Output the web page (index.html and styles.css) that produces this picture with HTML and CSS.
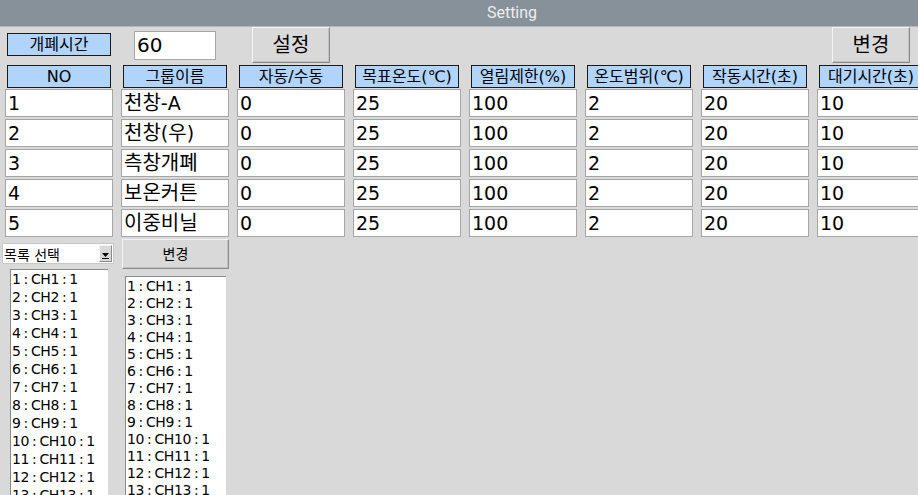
FILE: index.html
```html
<!DOCTYPE html>
<html lang="ko">
<head>
<meta charset="utf-8">
<title>Setting</title>
<link rel="stylesheet" href="styles.css">
</head>
<body>
<div class="app">
  <div class="titlebar">Setting</div>
  <div class="toprow">
    <div class="lbl lbl-open">개폐시간</div>
    <div class="entry entry-open">60</div>
    <div class="btn btn-set">설정</div>
    <div class="spacer"></div>
    <div class="btn btn-change">변경</div>
  </div>
  <div class="grid">
    <div class="lbl">NO</div>
    <div class="lbl">그룹이름</div>
    <div class="lbl">자동/수동</div>
    <div class="lbl">목표온도(℃)</div>
    <div class="lbl">열림제한(%)</div>
    <div class="lbl">온도범위(℃)</div>
    <div class="lbl">작동시간(초)</div>
    <div class="lbl">대기시간(초)</div>

    <div class="entry">1</div><div class="entry"><span class="ko">천창</span>-A</div><div class="entry">0</div><div class="entry">25</div><div class="entry">100</div><div class="entry">2</div><div class="entry">20</div><div class="entry">10</div>
    <div class="entry">2</div><div class="entry"><span class="ko">천창</span>(<span class="ko">우</span>)</div><div class="entry">0</div><div class="entry">25</div><div class="entry">100</div><div class="entry">2</div><div class="entry">20</div><div class="entry">10</div>
    <div class="entry">3</div><div class="entry"><span class="ko">측창개폐</span></div><div class="entry">0</div><div class="entry">25</div><div class="entry">100</div><div class="entry">2</div><div class="entry">20</div><div class="entry">10</div>
    <div class="entry">4</div><div class="entry"><span class="ko">보온커튼</span></div><div class="entry">0</div><div class="entry">25</div><div class="entry">100</div><div class="entry">2</div><div class="entry">20</div><div class="entry">10</div>
    <div class="entry">5</div><div class="entry"><span class="ko">이중비닐</span></div><div class="entry">0</div><div class="entry">25</div><div class="entry">100</div><div class="entry">2</div><div class="entry">20</div><div class="entry">10</div>
  </div>
  <div class="lower">
    <div class="col col-left">
      <div class="combo">
        <span class="combo-text">목록 선택</span>
        <span class="combo-arrow"><svg width="9" height="7" viewBox="0 0 9 7"><path d="M1 1 L8 1 L4.5 5 Z" fill="#000"/><rect x="1" y="6" width="7" height="1" fill="#000"/></svg></span>
      </div>
      <div class="listbox lb-left">
        <div>1 : CH1 : 1</div><div>2 : CH2 : 1</div><div>3 : CH3 : 1</div><div>4 : CH4 : 1</div><div>5 : CH5 : 1</div><div>6 : CH6 : 1</div><div>7 : CH7 : 1</div><div>8 : CH8 : 1</div><div>9 : CH9 : 1</div><div>10 : CH10 : 1</div><div>11 : CH11 : 1</div><div>12 : CH12 : 1</div><div>13 : CH13 : 1</div>
      </div>
    </div>
    <div class="col col-right">
      <div class="btn btn-small">변경</div>
      <div class="listbox lb-right">
        <div>1 : CH1 : 1</div><div>2 : CH2 : 1</div><div>3 : CH3 : 1</div><div>4 : CH4 : 1</div><div>5 : CH5 : 1</div><div>6 : CH6 : 1</div><div>7 : CH7 : 1</div><div>8 : CH8 : 1</div><div>9 : CH9 : 1</div><div>10 : CH10 : 1</div><div>11 : CH11 : 1</div><div>12 : CH12 : 1</div><div>13 : CH13 : 1</div>
      </div>
    </div>
  </div>
</div>
</body>
</html>
```

FILE: styles.css
```css
* { box-sizing: border-box; }
html, body { margin: 0; padding: 0; }
body {
  width: 918px;
  height: 495px;
  overflow: hidden;
  background: #d9d9d9;
  font-family: "DejaVu Sans", "Noto Sans CJK KR", sans-serif;
  color: #000;
}
.app { width: 918px; height: 495px; overflow: hidden; }
.titlebar {
  height: 27px;
  background: #87919a;
  border-bottom: 1px solid #b4b9bd;
  color: #eceef0;
  font-family: Roboto, "Noto Sans", sans-serif;
  font-size: 16px;
  line-height: 26px;
  text-align: center;
  padding-left: 106px;
}
.toprow {
  height: 37px;
  display: flex;
  align-items: flex-start;
}
.lbl {
  height: 23px;
  background: #b1d4fd;
  border: 1px solid #1a1a1a;
  font-size: 16px;
  line-height: 21px;
  text-align: center;
  white-space: nowrap;
  overflow: hidden;
}
.lbl-open { width: 104px; margin: 6px 0 0 7px; }
.entry {
  height: 28px;
  background: #fff;
  border: 1px solid #a6a6a6;
  font-size: 19px;
  line-height: 26px;
  padding-left: 2px;
  white-space: nowrap;
  overflow: hidden;
}
.ko { font-size: 20px; }
.entry-open { width: 82px; height: 29px; margin: 4px 0 0 23px; line-height: 27px; font-size: 20px; }
.btn {
  background: #d9d9d9;
  border: 1px solid;
  border-color: #f4f4f4 #8a8a8a #8a8a8a #f4f4f4;
  box-shadow: inset -1px -1px 0 #c2c2c2;
  text-align: center;
  font-size: 20px;
}
.btn-set { width: 78px; height: 36px; margin: 0 0 0 36px; line-height: 34px; }
.spacer { flex: 1; }
.btn-change { width: 78px; height: 36px; margin: 0 8px 0 0; line-height: 34px; }
.grid {
  display: grid;
  grid-template-columns: repeat(8, 116px);
  row-gap: 2px;
  margin-left: 3px;
  margin-top: 1px;
  width: 928px;
}
.grid .lbl { width: 104px; margin-left: 4px; margin-bottom: -1px; }
.grid .entry { width: 108px; margin-left: 2px; }
.lower { display: flex; margin-top: 1px; }
.col { display: flex; flex-direction: column; }
.col-left { width: 122px; padding-left: 2px; }
.combo {
  margin-top: 5px;
  width: 112px;
  height: 21px;
  background: #fff;
  border: 1px solid #c8c8c8;
  display: flex;
  align-items: center;
  font-size: 14px;
}
.combo-text { flex: 1; padding-left: 1px; }
.combo-arrow {
  width: 13px;
  height: 17px;
  margin-right: 1px;
  background: #d9d9d9;
  border: 1px solid;
  border-color: #f4f4f4 #8a8a8a #8a8a8a #f4f4f4;
  display: flex;
  align-items: flex-end;
  justify-content: center;
  padding-bottom: 2px;
}
.listbox {
  background: #fff;
  border-left: 1px solid #8a8a8a;
  border-top: 1px solid #8a8a8a;
  font-size: 14px;
  letter-spacing: -0.4px;
  padding-left: 1px;
  word-spacing: -1px;
  white-space: nowrap;
  overflow: hidden;
  flex: 1;
}
.lb-left { width: 98px; margin: 5px 0 0 8px; height: 240px; }
.lb-left div { height: 18px; line-height: 18px; }
.btn-small { width: 107px; height: 30px; line-height: 28px; font-size: 14px; margin-top: 1px; }
.lb-right { width: 101px; margin: 7px 0 0 3px; height: 240px; padding-top: 1px; }
.lb-right div { height: 17px; line-height: 17px; }
```
